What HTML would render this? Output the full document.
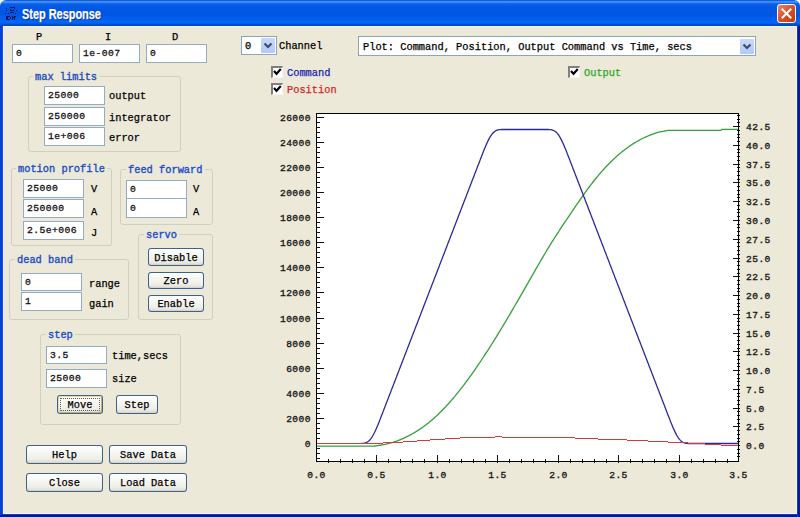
<!DOCTYPE html>
<html><head><meta charset="utf-8"><style>
html,body{margin:0;padding:0;background:#fff;}
body{width:800px;height:517px;position:relative;overflow:hidden;font-family:"Liberation Mono", monospace;font-size:10.35px;color:#000;font-weight:normal;-webkit-text-stroke:0.25px currentColor;}
.tb{position:absolute;left:0;top:0;width:800px;height:27px;border-radius:6px 6px 0 0;
background:linear-gradient(to bottom,#1060d8 0px,#1060d8 0.8px,#3f8ef8 1.2px,#3a88f6 2.5px,#1466ec 3.5px,#065ce8 5px,#0058e4 8px,#0056e2 15px,#0060f0 19px,#0066f8 23px,#0052dc 24px,#0046c6 25px,#0046c6 26px,#f4f6fc 26px,#f4f6fc 27px);}
.fr{position:absolute;background:#0046d5;}
.cl{position:absolute;left:3px;top:27px;width:794px;height:486px;background:#ece9d8;}
.tt{position:absolute;left:22px;top:4px;font-family:"Liberation Sans",sans-serif;font-weight:bold;font-size:14px;color:#fff;text-shadow:1px 1px 0 #0a2a8a;letter-spacing:0px;line-height:20px;transform-origin:0 0;transform:scaleX(0.78)}
.ed{position:absolute;background:#fff;border:1px solid #93abc3;padding-left:3px;box-sizing:content-box;white-space:nowrap;overflow:hidden;font-size:9.7px;letter-spacing:0.43px;-webkit-text-stroke:0.3px #111;color:#111}
.lb{position:absolute;line-height:14px;white-space:nowrap}
.gb{position:absolute;border:1px solid #d0d0bf;border-radius:3px}
.gl{position:absolute;line-height:14px;color:#1a4cc8;background:#ece9d8;padding:0 2px;white-space:nowrap;-webkit-text-stroke:0.35px #1a4cc8}
.bt{position:absolute;border:1px solid #3d6389;border-radius:3px;text-align:center;white-space:nowrap;box-sizing:content-box;overflow:hidden;
box-shadow:0 0 0.6px #3d6389, inset 0 -1px 0 #d8d4c8;
background:linear-gradient(to bottom,#ffffff 0%,#f6f6f2 40%,#efeee8 75%,#dedad0 100%);}
.def{box-shadow:0 0 0.6px #3d6389, inset 1px 1px 0 #e8dca8, inset -1px -1px 0 #c8b06a;}
.def:after{content:"";position:absolute;left:2px;top:2px;right:2px;bottom:2px;border:1px dotted #606060}
.cb{position:absolute;background:#fff;border:1px solid #8ca4bc;}
.ct{position:absolute;left:4px;top:2px;line-height:14px;white-space:nowrap}
.dd{position:absolute;width:14px;height:15px;background:linear-gradient(to bottom,#cad8fa,#b4c8f6);border-radius:1px}
.ck{position:absolute;width:12px;height:12px;background:#fff;box-sizing:border-box;border-top:2px solid #808080;border-left:2px solid #808080;border-right:1px solid #f4f4f0;border-bottom:1px solid #f4f4f0}
.ck svg{position:absolute;left:-2px;top:-2px}
.ch{position:absolute;left:0;top:0}
.xb{position:absolute;left:777px;top:4px;width:19px;height:19px;box-sizing:border-box;border:1px solid #fff;border-radius:3px;background:linear-gradient(135deg,#e8876a,#d8502a 50%,#c13a14)}
</style></head><body>
<div class="tb"></div>
<div class="fr" style="left:0;top:26px;width:800px;height:491px;background:#f2f6fc"></div>
<div class="fr" style="left:0;top:26px;width:3px;height:491px;background:linear-gradient(to right,#0040e0 0px,#0040e0 1.5px,#2458c8 3px)"></div>
<div class="fr" style="left:797px;top:26px;width:3px;height:491px;background:linear-gradient(to right,#2a48b0 0px,#001aa0 1.5px,#00189c 3px)"></div>
<div class="fr" style="left:0;top:514px;width:800px;height:3px;background:linear-gradient(to bottom,#2a4ab8 0px,#001a98 1.5px,#001890 3px)"></div>
<div class="fr" style="left:797px;top:26px;width:3px;height:491px;background:linear-gradient(to right,#2a48b0 0px,#001aa0 1.5px,#00189c 3px)"></div>
<div class="cl" style="left:4px;width:792px;height:486px"></div>
<div class="tt">Step Response</div>
<svg style="position:absolute;left:0;top:0" width="24" height="24" viewBox="0 0 24 24"><g fill="#0a1458"><rect x="10" y="7" width="5" height="1"/><rect x="14" y="8" width="1" height="1"/><rect x="6" y="8" width="1" height="1"/><rect x="10" y="9" width="1" height="2"/><rect x="11" y="10" width="3" height="1"/><rect x="6" y="10" width="1" height="1"/><rect x="16" y="10" width="1" height="1"/><rect x="5" y="13" width="1" height="1"/><rect x="8" y="13" width="1" height="1"/><rect x="15" y="13" width="1" height="1"/><rect x="10" y="12" width="4" height="1"/><rect x="6" y="16" width="2" height="4"/><rect x="8" y="16" width="2" height="1"/><rect x="8" y="19" width="2" height="1"/><rect x="10" y="17" width="1" height="2"/><rect x="12" y="16" width="1" height="4"/><rect x="13" y="17" width="1" height="1"/><rect x="14" y="16" width="1" height="4"/><rect x="15" y="16" width="1" height="1"/></g></svg>
<div class="xb"><svg width="17" height="17" viewBox="0 0 17 17" style="position:absolute;left:0;top:0"><path d="M4.5 4.5 L12.5 12.5 M12.5 4.5 L4.5 12.5" stroke="#fff" stroke-width="2" stroke-linecap="square"/></svg></div>
<div class="lb" style="left:36px;top:29.5px;">P</div>
<div class="lb" style="left:105px;top:29.5px;">I</div>
<div class="lb" style="left:172px;top:29.5px;">D</div>
<div class="ed" style="left:12px;top:44px;width:56px;height:17px;line-height:18px">0</div>
<div class="ed" style="left:79px;top:44px;width:56px;height:17px;line-height:18px">1e-007</div>
<div class="ed" style="left:146px;top:44px;width:56px;height:17px;line-height:18px">0</div>
<div class="gb" style="left:28px;top:76px;width:151px;height:74px"></div>
<div class="gl" style="left:33px;top:70px">max limits</div>
<div class="ed" style="left:44px;top:86px;width:56px;height:17px;line-height:18px">25000</div>
<div class="ed" style="left:44px;top:107px;width:56px;height:17px;line-height:18px">250000</div>
<div class="ed" style="left:44px;top:127px;width:56px;height:17px;line-height:18px">1e+006</div>
<div class="lb" style="left:109px;top:88.5px;">output</div>
<div class="lb" style="left:109px;top:110.5px;">integrator</div>
<div class="lb" style="left:109px;top:130.5px;">error</div>
<div class="gb" style="left:11px;top:168px;width:99px;height:76px"></div>
<div class="gl" style="left:16px;top:162px">motion profile</div>
<div class="ed" style="left:23px;top:179px;width:56px;height:17px;line-height:18px">25000</div>
<div class="ed" style="left:23px;top:199px;width:56px;height:17px;line-height:18px">250000</div>
<div class="ed" style="left:23px;top:221px;width:56px;height:17px;line-height:18px">2.5e+006</div>
<div class="lb" style="left:91px;top:181.5px;">V</div>
<div class="lb" style="left:91px;top:204.5px;">A</div>
<div class="lb" style="left:91px;top:225.5px;">J</div>
<div class="gb" style="left:120px;top:169px;width:91px;height:54px"></div>
<div class="gl" style="left:126px;top:163px">feed forward</div>
<div class="ed" style="left:126px;top:180px;width:56px;height:17px;line-height:18px">0</div>
<div class="ed" style="left:126px;top:198px;width:56px;height:18px;line-height:19px">0</div>
<div class="lb" style="left:193px;top:181.5px;">V</div>
<div class="lb" style="left:193px;top:204.5px;">A</div>
<div class="gb" style="left:138px;top:234px;width:73px;height:84px"></div>
<div class="gl" style="left:144px;top:228px">servo</div>
<div class="bt" style="left:148px;top:248px;width:54px;height:16px;line-height:18px">Disable</div>
<div class="bt" style="left:148px;top:272px;width:54px;height:15px;line-height:17px">Zero</div>
<div class="bt" style="left:148px;top:295px;width:54px;height:15px;line-height:17px">Enable</div>
<div class="gb" style="left:9px;top:259px;width:118px;height:59px"></div>
<div class="gl" style="left:15px;top:253px">dead band</div>
<div class="ed" style="left:21px;top:273px;width:56px;height:16px;line-height:17px">0</div>
<div class="ed" style="left:21px;top:292px;width:56px;height:17px;line-height:18px">1</div>
<div class="lb" style="left:89px;top:276.5px;">range</div>
<div class="lb" style="left:89px;top:296.5px;">gain</div>
<div class="gb" style="left:40px;top:334px;width:139px;height:89px"></div>
<div class="gl" style="left:46px;top:328px">step</div>
<div class="ed" style="left:46px;top:346px;width:56px;height:16px;line-height:17px">3.5</div>
<div class="ed" style="left:46px;top:369px;width:56px;height:17px;line-height:18px">25000</div>
<div class="lb" style="left:112px;top:348.5px;">time,secs</div>
<div class="lb" style="left:112px;top:371.5px;">size</div>
<div class="bt def" style="left:57px;top:395px;width:44px;height:17px;line-height:19px">Move</div>
<div class="bt" style="left:116px;top:395px;width:40px;height:17px;line-height:19px">Step</div>
<div class="bt" style="left:26px;top:445px;width:75px;height:17px;line-height:19px">Help</div>
<div class="bt" style="left:109px;top:445px;width:76px;height:17px;line-height:19px">Save Data</div>
<div class="bt" style="left:26px;top:473px;width:75px;height:17px;line-height:19px">Close</div>
<div class="bt" style="left:109px;top:473px;width:76px;height:17px;line-height:19px">Load Data</div>
<div class="cb" style="left:241px;top:36px;width:34px;height:17px"><span class="ct" style="left:3px">0</span><div class="dd" style="left:19px;top:1px"><svg width="14" height="15" viewBox="0 0 14 15" style="position:absolute;left:0;top:0"><path d="M3.5 5.5 L7 9 L10.5 5.5" stroke="#3d4d6e" stroke-width="2.2" fill="none"/></svg></div></div>
<div class="lb" style="left:279px;top:38.5px;">Channel</div>
<div class="cb" style="left:358px;top:36px;width:396px;height:18px"><span class="ct" style="top:2.5px">Plot: Command, Position, Output Command vs Time, secs</span><div class="dd" style="left:381px;top:2px"><svg width="14" height="15" viewBox="0 0 14 15" style="position:absolute;left:0;top:0"><path d="M3.5 5.5 L7 9 L10.5 5.5" stroke="#3d4d6e" stroke-width="2.2" fill="none"/></svg></div></div>
<div class="ck" style="left:271px;top:66px"><svg width="12" height="12" viewBox="0 0 12 12"><path d="M3 5 L5.5 7.8 L9.8 3" stroke="#000" stroke-width="2.1" fill="none"/></svg></div>
<div class="ck" style="left:271px;top:83px"><svg width="12" height="12" viewBox="0 0 12 12"><path d="M3 5 L5.5 7.8 L9.8 3" stroke="#000" stroke-width="2.1" fill="none"/></svg></div>
<div class="ck" style="left:568px;top:66px"><svg width="12" height="12" viewBox="0 0 12 12"><path d="M3 5 L5.5 7.8 L9.8 3" stroke="#000" stroke-width="2.1" fill="none"/></svg></div>
<div class="lb" style="left:287px;top:65.5px;color:#2222b0">Command</div>
<div class="lb" style="left:287px;top:82.5px;color:#d02828">Position</div>
<div class="lb" style="left:584px;top:65.5px;color:#2aa82a">Output</div>
<svg class="ch" width="800" height="517" viewBox="0 0 800 517"><rect x="316" y="113" width="423" height="349" fill="#fff"/><g fill="#111"><rect x="316" y="458" width="4" height="1"/><rect x="316" y="453" width="4" height="1"/><rect x="316" y="448" width="4" height="1"/><rect x="316" y="443" width="8" height="1"/><rect x="316" y="438" width="4" height="1"/><rect x="316" y="433" width="4" height="1"/><rect x="316" y="428" width="4" height="1"/><rect x="316" y="423" width="4" height="1"/><rect x="316" y="418" width="8" height="1"/><rect x="316" y="413" width="4" height="1"/><rect x="316" y="408" width="4" height="1"/><rect x="316" y="403" width="4" height="1"/><rect x="316" y="398" width="4" height="1"/><rect x="316" y="393" width="8" height="1"/><rect x="316" y="388" width="4" height="1"/><rect x="316" y="383" width="4" height="1"/><rect x="316" y="378" width="4" height="1"/><rect x="316" y="373" width="4" height="1"/><rect x="316" y="368" width="8" height="1"/><rect x="316" y="363" width="4" height="1"/><rect x="316" y="358" width="4" height="1"/><rect x="316" y="353" width="4" height="1"/><rect x="316" y="348" width="4" height="1"/><rect x="316" y="343" width="8" height="1"/><rect x="316" y="338" width="4" height="1"/><rect x="316" y="333" width="4" height="1"/><rect x="316" y="328" width="4" height="1"/><rect x="316" y="323" width="4" height="1"/><rect x="316" y="318" width="8" height="1"/><rect x="316" y="312" width="4" height="1"/><rect x="316" y="307" width="4" height="1"/><rect x="316" y="302" width="4" height="1"/><rect x="316" y="297" width="4" height="1"/><rect x="316" y="292" width="8" height="1"/><rect x="316" y="287" width="4" height="1"/><rect x="316" y="282" width="4" height="1"/><rect x="316" y="277" width="4" height="1"/><rect x="316" y="272" width="4" height="1"/><rect x="316" y="267" width="8" height="1"/><rect x="316" y="262" width="4" height="1"/><rect x="316" y="257" width="4" height="1"/><rect x="316" y="252" width="4" height="1"/><rect x="316" y="247" width="4" height="1"/><rect x="316" y="242" width="8" height="1"/><rect x="316" y="237" width="4" height="1"/><rect x="316" y="232" width="4" height="1"/><rect x="316" y="227" width="4" height="1"/><rect x="316" y="222" width="4" height="1"/><rect x="316" y="217" width="8" height="1"/><rect x="316" y="212" width="4" height="1"/><rect x="316" y="207" width="4" height="1"/><rect x="316" y="202" width="4" height="1"/><rect x="316" y="197" width="4" height="1"/><rect x="316" y="192" width="8" height="1"/><rect x="316" y="187" width="4" height="1"/><rect x="316" y="182" width="4" height="1"/><rect x="316" y="177" width="4" height="1"/><rect x="316" y="172" width="4" height="1"/><rect x="316" y="167" width="8" height="1"/><rect x="316" y="162" width="4" height="1"/><rect x="316" y="157" width="4" height="1"/><rect x="316" y="152" width="4" height="1"/><rect x="316" y="147" width="4" height="1"/><rect x="316" y="142" width="8" height="1"/><rect x="316" y="137" width="4" height="1"/><rect x="316" y="132" width="4" height="1"/><rect x="316" y="127" width="4" height="1"/><rect x="316" y="122" width="4" height="1"/><rect x="316" y="117" width="8" height="1"/><rect x="737" y="456" width="3" height="1"/><rect x="737" y="453" width="3" height="1"/><rect x="737" y="449" width="3" height="1"/><rect x="733" y="445" width="6" height="1"/><rect x="739" y="445" width="1" height="1"/><rect x="737" y="441" width="3" height="1"/><rect x="737" y="438" width="3" height="1"/><rect x="737" y="434" width="3" height="1"/><rect x="737" y="430" width="3" height="1"/><rect x="733" y="426" width="6" height="1"/><rect x="739" y="426" width="1" height="1"/><rect x="737" y="423" width="3" height="1"/><rect x="737" y="419" width="3" height="1"/><rect x="737" y="415" width="3" height="1"/><rect x="737" y="411" width="3" height="1"/><rect x="733" y="408" width="6" height="1"/><rect x="739" y="408" width="1" height="1"/><rect x="737" y="404" width="3" height="1"/><rect x="737" y="400" width="3" height="1"/><rect x="737" y="396" width="3" height="1"/><rect x="737" y="393" width="3" height="1"/><rect x="733" y="389" width="6" height="1"/><rect x="739" y="389" width="1" height="1"/><rect x="737" y="385" width="3" height="1"/><rect x="737" y="381" width="3" height="1"/><rect x="737" y="378" width="3" height="1"/><rect x="737" y="374" width="3" height="1"/><rect x="733" y="370" width="6" height="1"/><rect x="739" y="370" width="1" height="1"/><rect x="737" y="366" width="3" height="1"/><rect x="737" y="363" width="3" height="1"/><rect x="737" y="359" width="3" height="1"/><rect x="737" y="355" width="3" height="1"/><rect x="733" y="351" width="6" height="1"/><rect x="739" y="351" width="1" height="1"/><rect x="737" y="348" width="3" height="1"/><rect x="737" y="344" width="3" height="1"/><rect x="737" y="340" width="3" height="1"/><rect x="737" y="336" width="3" height="1"/><rect x="733" y="333" width="6" height="1"/><rect x="739" y="333" width="1" height="1"/><rect x="737" y="329" width="3" height="1"/><rect x="737" y="325" width="3" height="1"/><rect x="737" y="321" width="3" height="1"/><rect x="737" y="318" width="3" height="1"/><rect x="733" y="314" width="6" height="1"/><rect x="739" y="314" width="1" height="1"/><rect x="737" y="310" width="3" height="1"/><rect x="737" y="306" width="3" height="1"/><rect x="737" y="303" width="3" height="1"/><rect x="737" y="299" width="3" height="1"/><rect x="733" y="295" width="6" height="1"/><rect x="739" y="295" width="1" height="1"/><rect x="737" y="291" width="3" height="1"/><rect x="737" y="288" width="3" height="1"/><rect x="737" y="284" width="3" height="1"/><rect x="737" y="280" width="3" height="1"/><rect x="733" y="276" width="6" height="1"/><rect x="739" y="276" width="1" height="1"/><rect x="737" y="273" width="3" height="1"/><rect x="737" y="269" width="3" height="1"/><rect x="737" y="265" width="3" height="1"/><rect x="737" y="261" width="3" height="1"/><rect x="733" y="258" width="6" height="1"/><rect x="739" y="258" width="1" height="1"/><rect x="737" y="254" width="3" height="1"/><rect x="737" y="250" width="3" height="1"/><rect x="737" y="246" width="3" height="1"/><rect x="737" y="242" width="3" height="1"/><rect x="733" y="239" width="6" height="1"/><rect x="739" y="239" width="1" height="1"/><rect x="737" y="235" width="3" height="1"/><rect x="737" y="231" width="3" height="1"/><rect x="737" y="227" width="3" height="1"/><rect x="737" y="224" width="3" height="1"/><rect x="733" y="220" width="6" height="1"/><rect x="739" y="220" width="1" height="1"/><rect x="737" y="216" width="3" height="1"/><rect x="737" y="212" width="3" height="1"/><rect x="737" y="209" width="3" height="1"/><rect x="737" y="205" width="3" height="1"/><rect x="733" y="201" width="6" height="1"/><rect x="739" y="201" width="1" height="1"/><rect x="737" y="197" width="3" height="1"/><rect x="737" y="194" width="3" height="1"/><rect x="737" y="190" width="3" height="1"/><rect x="737" y="186" width="3" height="1"/><rect x="733" y="182" width="6" height="1"/><rect x="739" y="182" width="1" height="1"/><rect x="737" y="179" width="3" height="1"/><rect x="737" y="175" width="3" height="1"/><rect x="737" y="171" width="3" height="1"/><rect x="737" y="167" width="3" height="1"/><rect x="733" y="164" width="6" height="1"/><rect x="739" y="164" width="1" height="1"/><rect x="737" y="160" width="3" height="1"/><rect x="737" y="156" width="3" height="1"/><rect x="737" y="152" width="3" height="1"/><rect x="737" y="149" width="3" height="1"/><rect x="733" y="145" width="6" height="1"/><rect x="739" y="145" width="1" height="1"/><rect x="737" y="141" width="3" height="1"/><rect x="737" y="137" width="3" height="1"/><rect x="737" y="134" width="3" height="1"/><rect x="737" y="130" width="3" height="1"/><rect x="733" y="126" width="6" height="1"/><rect x="739" y="126" width="1" height="1"/><rect x="737" y="122" width="3" height="1"/><rect x="737" y="119" width="3" height="1"/><rect x="737" y="115" width="3" height="1"/><rect x="328" y="459" width="1" height="4"/><rect x="340" y="459" width="1" height="4"/><rect x="352" y="459" width="1" height="4"/><rect x="364" y="459" width="1" height="4"/><rect x="376" y="455" width="1" height="8"/><rect x="388" y="459" width="1" height="4"/><rect x="400" y="459" width="1" height="4"/><rect x="412" y="459" width="1" height="4"/><rect x="424" y="459" width="1" height="4"/><rect x="437" y="455" width="1" height="8"/><rect x="449" y="459" width="1" height="4"/><rect x="461" y="459" width="1" height="4"/><rect x="473" y="459" width="1" height="4"/><rect x="485" y="459" width="1" height="4"/><rect x="497" y="455" width="1" height="8"/><rect x="509" y="459" width="1" height="4"/><rect x="521" y="459" width="1" height="4"/><rect x="533" y="459" width="1" height="4"/><rect x="545" y="459" width="1" height="4"/><rect x="558" y="455" width="1" height="8"/><rect x="570" y="459" width="1" height="4"/><rect x="582" y="459" width="1" height="4"/><rect x="594" y="459" width="1" height="4"/><rect x="606" y="459" width="1" height="4"/><rect x="618" y="455" width="1" height="8"/><rect x="630" y="459" width="1" height="4"/><rect x="642" y="459" width="1" height="4"/><rect x="654" y="459" width="1" height="4"/><rect x="666" y="459" width="1" height="4"/><rect x="679" y="455" width="1" height="8"/><rect x="691" y="459" width="1" height="4"/><rect x="703" y="459" width="1" height="4"/><rect x="715" y="459" width="1" height="4"/><rect x="727" y="459" width="1" height="4"/></g><polyline points="316.70,446.10 374.00,446.10 375.00,445.98 376.00,445.85 377.00,445.71 378.00,445.56 379.00,445.41 380.00,445.25 381.00,445.09 382.00,444.92 383.00,444.73 384.00,444.54 385.00,444.34 386.00,444.13 387.00,443.90 388.00,443.66 389.00,443.41 390.00,443.14 391.00,442.86 392.00,442.57 393.00,442.27 394.00,441.95 395.00,441.62 396.00,441.28 397.00,440.93 398.00,440.56 399.00,440.18 400.00,439.79 401.00,439.38 402.00,438.96 403.00,438.53 404.00,438.09 405.00,437.63 406.00,437.15 407.00,436.67 408.00,436.17 409.00,435.65 410.00,435.13 411.00,434.59 412.00,434.03 413.00,433.46 414.00,432.88 415.00,432.28 416.00,431.67 417.00,431.05 418.00,430.41 419.00,429.75 420.00,429.08 421.00,428.40 422.00,427.70 423.00,426.99 424.00,426.26 425.00,425.52 426.00,424.76 427.00,423.99 428.00,423.20 429.00,422.40 430.00,421.58 431.00,420.75 432.00,419.90 433.00,419.04 434.00,418.16 435.00,417.27 436.00,416.36 437.00,415.43 438.00,414.49 439.00,413.53 440.00,412.56 441.00,411.57 442.00,410.56 443.00,409.54 444.00,408.50 445.00,407.45 446.00,406.38 447.00,405.30 448.00,404.21 449.00,403.09 450.00,401.97 451.00,400.83 452.00,399.67 453.00,398.51 454.00,397.32 455.00,396.13 456.00,394.91 457.00,393.69 458.00,392.46 459.00,391.21 460.00,389.95 461.00,388.67 462.00,387.38 463.00,386.08 464.00,384.77 465.00,383.45 466.00,382.11 467.00,380.76 468.00,379.40 469.00,378.03 470.00,376.65 471.00,375.26 472.00,373.85 473.00,372.44 474.00,371.01 475.00,369.58 476.00,368.13 477.00,366.68 478.00,365.21 479.00,363.74 480.00,362.25 481.00,360.75 482.00,359.25 483.00,357.74 484.00,356.22 485.00,354.69 486.00,353.15 487.00,351.60 488.00,350.04 489.00,348.48 490.00,346.91 491.00,345.33 492.00,343.74 493.00,342.15 494.00,340.54 495.00,338.94 496.00,337.32 497.00,335.70 498.00,334.07 499.00,332.43 500.00,330.79 501.00,329.14 502.00,327.49 503.00,325.83 504.00,324.16 505.00,322.49 506.00,320.81 507.00,319.13 508.00,317.44 509.00,315.75 510.00,314.06 511.00,312.36 512.00,310.65 513.00,308.94 514.00,307.23 515.00,305.51 516.00,303.79 517.00,302.07 518.00,300.34 519.00,298.61 520.00,296.88 521.00,295.14 522.00,293.40 523.00,291.66 524.00,289.92 525.00,288.17 526.00,286.42 527.00,284.67 528.00,282.92 529.00,281.16 530.00,279.41 531.00,277.66 532.00,275.91 533.00,274.16 534.00,272.41 535.00,270.66 536.00,268.92 537.00,267.18 538.00,265.45 539.00,263.71 540.00,261.99 541.00,260.27 542.00,258.56 543.00,256.85 544.00,255.16 545.00,253.47 546.00,251.79 547.00,250.12 548.00,248.46 549.00,246.81 550.00,245.18 551.00,243.55 552.00,241.94 553.00,240.34 554.00,238.75 555.00,237.18 556.00,235.62 557.00,234.07 558.00,232.53 559.00,231.00 560.00,229.48 561.00,227.97 562.00,226.46 563.00,224.96 564.00,223.47 565.00,221.98 566.00,220.49 567.00,219.00 568.00,217.52 569.00,216.04 570.00,214.56 571.00,213.08 572.00,211.60 573.00,210.12 574.00,208.64 575.00,207.16 576.00,205.69 577.00,204.22 578.00,202.76 579.00,201.30 580.00,199.85 581.00,198.40 582.00,196.97 583.00,195.54 584.00,194.13 585.00,192.73 586.00,191.34 587.00,189.96 588.00,188.60 589.00,187.25 590.00,185.91 591.00,184.60 592.00,183.30 593.00,182.01 594.00,180.74 595.00,179.49 596.00,178.26 597.00,177.04 598.00,175.84 599.00,174.65 600.00,173.48 601.00,172.33 602.00,171.19 603.00,170.07 604.00,168.97 605.00,167.88 606.00,166.81 607.00,165.75 608.00,164.71 609.00,163.69 610.00,162.68 611.00,161.69 612.00,160.72 613.00,159.76 614.00,158.82 615.00,157.89 616.00,156.98 617.00,156.08 618.00,155.20 619.00,154.34 620.00,153.49 621.00,152.66 622.00,151.85 623.00,151.05 624.00,150.26 625.00,149.49 626.00,148.74 627.00,148.00 628.00,147.28 629.00,146.57 630.00,145.88 631.00,145.20 632.00,144.54 633.00,143.89 634.00,143.26 635.00,142.64 636.00,142.04 637.00,141.45 638.00,140.88 639.00,140.33 640.00,139.79 641.00,139.26 642.00,138.74 643.00,138.24 644.00,137.76 645.00,137.30 646.00,136.84 647.00,136.40 648.00,135.98 649.00,135.56 650.00,135.17 651.00,134.78 652.00,134.40 653.00,134.02 654.00,133.65 655.00,133.30 656.00,132.97 657.00,132.67 658.00,132.40 659.00,132.16 660.00,131.93 661.00,131.73 662.00,131.53 663.00,131.35 664.00,131.17 665.00,131.00 666.00,130.81 667.00,130.62 668.00,130.46 669.00,130.40 670.00,130.40 671.00,130.40 672.00,130.40 673.00,130.40 674.00,130.40 675.00,130.40 676.00,130.40 677.00,130.40 678.00,130.40 679.00,130.40 680.00,130.40 681.00,130.40 682.00,130.40 683.00,130.40 684.00,130.40 685.00,130.40 686.00,130.40 687.00,130.40 688.00,130.40 689.00,130.40 690.00,130.40 691.00,130.40 692.00,130.40 693.00,130.40 694.00,130.40 695.00,130.40 696.00,130.40 697.00,130.40 698.00,130.40 699.00,130.40 700.00,130.40 701.00,130.40 702.00,130.40 703.00,130.40 704.00,130.40 705.00,130.40 706.00,130.40 707.00,130.40 708.00,130.40 709.00,130.40 710.00,130.40 711.00,130.40 712.00,130.40 713.00,130.40 714.00,130.40 715.00,130.40 716.00,130.40 717.00,130.40 718.00,130.40 719.00,130.40 720.00,130.40 721.00,130.40 722.00,129.30 738.60,129.30" fill="none" stroke="#38a038" stroke-width="1.3"/><polyline points="361.50,443.48 362.00,443.46 362.50,443.43 363.00,443.38 363.50,443.32 364.00,443.24 364.50,443.13 365.00,443.00 365.50,442.84 366.00,442.65 366.50,442.43 367.00,442.17 367.50,441.87 368.00,441.53 368.50,441.15 369.00,440.72 369.50,440.24 370.00,439.71 370.50,439.12 371.00,438.48 371.50,437.78 372.00,437.03 372.50,436.22 373.00,435.36 373.50,434.46 374.00,433.51 374.50,432.52 375.00,431.49 375.50,430.42 376.00,429.32 376.50,428.19 377.00,427.03 377.50,425.84 378.00,424.64 378.50,423.41 379.00,422.16 379.50,420.90 380.00,419.62 380.50,418.34 381.00,417.05 381.50,415.76 382.00,414.46 382.50,413.16 383.00,411.87 383.50,410.57 384.00,409.27 384.50,407.98 385.00,406.68 385.50,405.38 386.00,404.09 386.50,402.79 387.00,401.50 387.50,400.20 388.00,398.90 388.50,397.61 389.00,396.31 389.50,395.01 390.00,393.72 390.50,392.42 391.00,391.12 391.50,389.83 392.00,388.53 392.50,387.23 393.00,385.94 393.50,384.64 394.00,383.34 394.50,382.05 395.00,380.75 395.50,379.46 396.00,378.16 396.50,376.86 397.00,375.57 397.50,374.27 398.00,372.97 398.50,371.68 399.00,370.38 399.50,369.08 400.00,367.79 400.50,366.49 401.00,365.19 401.50,363.90 402.00,362.60 402.50,361.31 403.00,360.01 403.50,358.71 404.00,357.42 404.50,356.12 405.00,354.82 405.50,353.53 406.00,352.23 406.50,350.93 407.00,349.64 407.50,348.34 408.00,347.04 408.50,345.75 409.00,344.45 409.50,343.15 410.00,341.86 410.50,340.56 411.00,339.27 411.50,337.97 412.00,336.67 412.50,335.38 413.00,334.08 413.50,332.78 414.00,331.49 414.50,330.19 415.00,328.89 415.50,327.60 416.00,326.30 416.50,325.00 417.00,323.71 417.50,322.41 418.00,321.12 418.50,319.82 419.00,318.52 419.50,317.23 420.00,315.93 420.50,314.63 421.00,313.34 421.50,312.04 422.00,310.74 422.50,309.45 423.00,308.15 423.50,306.85 424.00,305.56 424.50,304.26 425.00,302.96 425.50,301.67 426.00,300.37 426.50,299.08 427.00,297.78 427.50,296.48 428.00,295.19 428.50,293.89 429.00,292.59 429.50,291.30 430.00,290.00 430.50,288.70 431.00,287.41 431.50,286.11 432.00,284.81 432.50,283.52 433.00,282.22 433.50,280.93 434.00,279.63 434.50,278.33 435.00,277.04 435.50,275.74 436.00,274.44 436.50,273.15 437.00,271.85 437.50,270.55 438.00,269.26 438.50,267.96 439.00,266.66 439.50,265.37 440.00,264.07 440.50,262.77 441.00,261.48 441.50,260.18 442.00,258.89 442.50,257.59 443.00,256.29 443.50,255.00 444.00,253.70 444.50,252.40 445.00,251.11 445.50,249.81 446.00,248.51 446.50,247.22 447.00,245.92 447.50,244.62 448.00,243.33 448.50,242.03 449.00,240.74 449.50,239.44 450.00,238.14 450.50,236.85 451.00,235.55 451.50,234.25 452.00,232.96 452.50,231.66 453.00,230.36 453.50,229.07 454.00,227.77 454.50,226.47 455.00,225.18 455.50,223.88 456.00,222.59 456.50,221.29 457.00,219.99 457.50,218.70 458.00,217.40 458.50,216.10 459.00,214.81 459.50,213.51 460.00,212.21 460.50,210.92 461.00,209.62 461.50,208.32 462.00,207.03 462.50,205.73 463.00,204.43 463.50,203.14 464.00,201.84 464.50,200.55 465.00,199.25 465.50,197.95 466.00,196.66 466.50,195.36 467.00,194.06 467.50,192.77 468.00,191.47 468.50,190.17 469.00,188.88 469.50,187.58 470.00,186.28 470.50,184.99 471.00,183.69 471.50,182.40 472.00,181.10 472.50,179.80 473.00,178.51 473.50,177.21 474.00,175.91 474.50,174.62 475.00,173.32 475.50,172.02 476.00,170.73 476.50,169.43 477.00,168.13 477.50,166.84 478.00,165.54 478.50,164.24 479.00,162.95 479.50,161.65 480.00,160.36 480.50,159.06 481.00,157.76 481.50,156.47 482.00,155.17 482.50,153.89 483.00,152.61 483.50,151.34 484.00,150.09 484.50,148.85 485.00,147.64 485.50,146.44 486.00,145.27 486.50,144.13 487.00,143.02 487.50,141.94 488.00,140.89 488.50,139.88 489.00,138.92 489.50,137.99 490.00,137.12 490.50,136.29 491.00,135.51 491.50,134.79 492.00,134.13 492.50,133.52 493.00,132.97 493.50,132.47 494.00,132.02 494.50,131.62 495.00,131.26 495.50,130.95 496.00,130.67 496.50,130.44 497.00,130.23 497.50,130.06 498.00,129.92 498.50,129.80 499.00,129.71 499.50,129.64 500.00,129.59 500.50,129.55 501.00,129.52 501.50,129.51 502.00,129.50 502.50,129.50 503.00,129.50 503.50,129.50 504.00,129.50 504.50,129.50 505.00,129.50 505.50,129.50 506.00,129.50 506.50,129.50 507.00,129.50 507.50,129.50 508.00,129.50 508.50,129.50 509.00,129.50 509.50,129.50 510.00,129.50 510.50,129.50 511.00,129.50 511.50,129.50 512.00,129.50 512.50,129.50 513.00,129.50 513.50,129.50 514.00,129.50 514.50,129.50 515.00,129.50 515.50,129.50 516.00,129.50 516.50,129.50 517.00,129.50 517.50,129.50 518.00,129.50 518.50,129.50 519.00,129.50 519.50,129.50 520.00,129.50 520.50,129.50 521.00,129.50 521.50,129.50 522.00,129.50 522.50,129.50 523.00,129.50 523.50,129.50 524.00,129.50 524.50,129.50 525.00,129.50 525.50,129.50 526.00,129.50 526.50,129.50 527.00,129.50 527.50,129.50 528.00,129.50 528.50,129.50 529.00,129.50 529.50,129.50 530.00,129.50 530.50,129.50 531.00,129.50 531.50,129.50 532.00,129.50 532.50,129.50 533.00,129.50 533.50,129.50 534.00,129.50 534.50,129.50 535.00,129.50 535.50,129.50 536.00,129.50 536.50,129.50 537.00,129.50 537.50,129.50 538.00,129.50 538.50,129.50 539.00,129.50 539.50,129.50 540.00,129.50 540.50,129.50 541.00,129.50 541.50,129.50 542.00,129.50 542.50,129.50 543.00,129.50 543.50,129.50 544.00,129.50 544.50,129.50 545.00,129.50 545.50,129.50 546.00,129.50 546.50,129.50 547.00,129.50 547.50,129.50 548.00,129.50 548.50,129.51 549.00,129.53 549.50,129.56 550.00,129.60 550.50,129.65 551.00,129.73 551.50,129.83 552.00,129.95 552.50,130.09 553.00,130.27 553.50,130.48 554.00,130.73 554.50,131.01 555.00,131.33 555.50,131.70 556.00,132.11 556.50,132.56 557.00,133.07 557.50,133.64 558.00,134.26 558.50,134.94 559.00,135.67 559.50,136.46 560.00,137.30 560.50,138.18 561.00,139.12 561.50,140.09 562.00,141.11 562.50,142.16 563.00,143.25 563.50,144.37 564.00,145.52 564.50,146.69 565.00,147.89 565.50,149.12 566.00,150.36 566.50,151.61 567.00,152.88 567.50,154.16 568.00,155.45 568.50,156.75 569.00,158.05 569.50,159.34 570.00,160.64 570.50,161.94 571.00,163.24 571.50,164.53 572.00,165.83 572.50,167.13 573.00,168.43 573.50,169.72 574.00,171.02 574.50,172.32 575.00,173.62 575.50,174.91 576.00,176.21 576.50,177.51 577.00,178.81 577.50,180.10 578.00,181.40 578.50,182.70 579.00,184.00 579.50,185.29 580.00,186.59 580.50,187.89 581.00,189.19 581.50,190.48 582.00,191.78 582.50,193.08 583.00,194.38 583.50,195.67 584.00,196.97 584.50,198.27 585.00,199.57 585.50,200.86 586.00,202.16 586.50,203.46 587.00,204.76 587.50,206.05 588.00,207.35 588.50,208.65 589.00,209.95 589.50,211.24 590.00,212.54 590.50,213.84 591.00,215.14 591.50,216.43 592.00,217.73 592.50,219.03 593.00,220.33 593.50,221.62 594.00,222.92 594.50,224.22 595.00,225.52 595.50,226.81 596.00,228.11 596.50,229.41 597.00,230.71 597.50,232.00 598.00,233.30 598.50,234.60 599.00,235.90 599.50,237.19 600.00,238.49 600.50,239.79 601.00,241.09 601.50,242.38 602.00,243.68 602.50,244.98 603.00,246.28 603.50,247.57 604.00,248.87 604.50,250.17 605.00,251.47 605.50,252.76 606.00,254.06 606.50,255.36 607.00,256.66 607.50,257.95 608.00,259.25 608.50,260.55 609.00,261.85 609.50,263.14 610.00,264.44 610.50,265.74 611.00,267.04 611.50,268.33 612.00,269.63 612.50,270.93 613.00,272.23 613.50,273.52 614.00,274.82 614.50,276.12 615.00,277.42 615.50,278.71 616.00,280.01 616.50,281.31 617.00,282.61 617.50,283.90 618.00,285.20 618.50,286.50 619.00,287.80 619.50,289.10 620.00,290.39 620.50,291.69 621.00,292.99 621.50,294.29 622.00,295.58 622.50,296.88 623.00,298.18 623.50,299.48 624.00,300.77 624.50,302.07 625.00,303.37 625.50,304.67 626.00,305.96 626.50,307.26 627.00,308.56 627.50,309.86 628.00,311.15 628.50,312.45 629.00,313.75 629.50,315.05 630.00,316.34 630.50,317.64 631.00,318.94 631.50,320.24 632.00,321.53 632.50,322.83 633.00,324.13 633.50,325.43 634.00,326.72 634.50,328.02 635.00,329.32 635.50,330.62 636.00,331.91 636.50,333.21 637.00,334.51 637.50,335.81 638.00,337.10 638.50,338.40 639.00,339.70 639.50,341.00 640.00,342.29 640.50,343.59 641.00,344.89 641.50,346.19 642.00,347.48 642.50,348.78 643.00,350.08 643.50,351.38 644.00,352.67 644.50,353.97 645.00,355.27 645.50,356.57 646.00,357.86 646.50,359.16 647.00,360.46 647.50,361.76 648.00,363.05 648.50,364.35 649.00,365.65 649.50,366.95 650.00,368.24 650.50,369.54 651.00,370.84 651.50,372.14 652.00,373.43 652.50,374.73 653.00,376.03 653.50,377.33 654.00,378.62 654.50,379.92 655.00,381.22 655.50,382.52 656.00,383.81 656.50,385.11 657.00,386.41 657.50,387.71 658.00,389.00 658.50,390.30 659.00,391.60 659.50,392.90 660.00,394.19 660.50,395.49 661.00,396.79 661.50,398.09 662.00,399.38 662.50,400.68 663.00,401.98 663.50,403.28 664.00,404.57 664.50,405.87 665.00,407.17 665.50,408.47 666.00,409.76 666.50,411.06 667.00,412.36 667.50,413.66 668.00,414.95 668.50,416.25 669.00,417.55 669.50,418.84 670.00,420.12 670.50,421.39 671.00,422.64 671.50,423.88 672.00,425.11 672.50,426.31 673.00,427.48 673.50,428.63 674.00,429.75 674.50,430.84 675.00,431.89 675.50,432.91 676.00,433.88 676.50,434.82 677.00,435.70 677.50,436.54 678.00,437.33 678.50,438.06 679.00,438.74 679.50,439.36 680.00,439.93 680.50,440.44 681.00,440.89 681.50,441.30 682.00,441.67 682.50,441.99 683.00,442.27 683.50,442.52 684.00,442.73 684.50,442.91 685.00,443.05 685.50,443.17 686.00,443.27 686.50,443.35 687.00,443.40 687.50,443.44 688.00,443.47 688.50,443.49 689.00,443.50 689.50,443.50 690.00,443.50 690.50,443.50 691.00,443.50 691.50,443.50 692.00,443.50 692.50,443.50 693.00,443.50 693.50,443.50 694.00,443.50 694.50,443.50 695.00,443.50 695.50,443.50 696.00,443.50 696.50,443.50 697.00,443.50 697.50,443.50 698.00,443.50 698.50,443.50 699.00,443.50 699.50,443.50 700.00,443.50 700.50,443.50 701.00,443.50 701.50,443.50 702.00,443.50 702.50,443.50 703.00,443.50 703.50,443.50 704.00,443.50 704.50,443.50 705.00,443.50 705.50,443.50 706.00,443.50 706.50,443.50 707.00,443.50 707.50,443.50 708.00,443.50 708.50,443.50 709.00,443.50 709.50,443.50 710.00,443.50 710.50,443.50 711.00,443.50 711.50,443.50 712.00,443.50 712.50,443.50 713.00,443.50 713.50,443.50 714.00,443.50 714.50,443.50 715.00,443.50 715.50,443.50 716.00,443.50 716.50,443.50 717.00,443.50 717.50,443.50 718.00,443.50 718.50,443.50 719.00,443.50 719.50,443.50 720.00,443.50 720.50,443.50 721.00,443.50 721.50,443.50 722.00,443.50 722.50,443.50 723.00,443.50 723.50,443.50 724.00,443.50 724.50,443.50 725.00,443.50 725.50,443.50 726.00,443.50 726.50,443.50 727.00,443.50 727.50,443.50 728.00,443.50 728.50,443.50 729.00,443.50 729.50,443.50 730.00,443.50 730.50,443.50 731.00,443.50 731.50,443.50 732.00,443.50 732.50,443.50 733.00,443.50 733.50,443.50 734.00,443.50 734.50,443.50 735.00,443.50 735.50,443.50 736.00,443.50 736.50,443.50 737.00,443.50 737.50,443.50 738.00,443.50 738.50,443.50" fill="none" stroke="#2a2a9c" stroke-width="1.3"/><g fill="#d43c3c"><rect x="316.7" y="443" width="66.31" height="1"/><rect x="383" y="442" width="20.01" height="1"/><rect x="403" y="441" width="14.01" height="1"/><rect x="417" y="440" width="13.01" height="1"/><rect x="430" y="439" width="15.01" height="1"/><rect x="445" y="438" width="15.01" height="1"/><rect x="460" y="437" width="35.01" height="1"/><rect x="495" y="436" width="7.01" height="1"/><rect x="502" y="437" width="73.01" height="1"/><rect x="575" y="438" width="23.01" height="1"/><rect x="598" y="439" width="29.01" height="1"/><rect x="627" y="440" width="21.01" height="1"/><rect x="648" y="441" width="20.01" height="1"/><rect x="668" y="442" width="20.01" height="1"/><rect x="688" y="443" width="17.01" height="1"/><rect x="705" y="444" width="16.01" height="1"/><rect x="721" y="445" width="17.61" height="1"/></g><g fill="#000"><rect x="316" y="113" width="423" height="1"/><rect x="316" y="461" width="423" height="1"/><rect x="316" y="113" width="1" height="349"/><rect x="738" y="113" width="1" height="349"/></g><g font-family="'Liberation Mono', monospace" font-size="9.6" fill="#181818" font-weight="normal" letter-spacing="0.45" stroke="#181818" stroke-width="0.35"><text x="311" y="447" text-anchor="end">0</text><text x="311" y="422" text-anchor="end">2000</text><text x="311" y="397" text-anchor="end">4000</text><text x="311" y="372" text-anchor="end">6000</text><text x="311" y="347" text-anchor="end">8000</text><text x="311" y="322" text-anchor="end">10000</text><text x="311" y="296" text-anchor="end">12000</text><text x="311" y="271" text-anchor="end">14000</text><text x="311" y="246" text-anchor="end">16000</text><text x="311" y="221" text-anchor="end">18000</text><text x="311" y="196" text-anchor="end">20000</text><text x="311" y="171" text-anchor="end">22000</text><text x="311" y="146" text-anchor="end">24000</text><text x="311" y="121" text-anchor="end">26000</text><text x="746" y="449">0.0</text><text x="746" y="430">2.5</text><text x="746" y="412">5.0</text><text x="746" y="393">7.5</text><text x="746" y="374">10.0</text><text x="746" y="355">12.5</text><text x="746" y="337">15.0</text><text x="746" y="318">17.5</text><text x="746" y="299">20.0</text><text x="746" y="280">22.5</text><text x="746" y="262">25.0</text><text x="746" y="243">27.5</text><text x="746" y="224">30.0</text><text x="746" y="205">32.5</text><text x="746" y="186">35.0</text><text x="746" y="168">37.5</text><text x="746" y="149">40.0</text><text x="746" y="130">42.5</text><text x="316.5" y="478" text-anchor="middle">0.0</text><text x="376.5" y="478" text-anchor="middle">0.5</text><text x="437.5" y="478" text-anchor="middle">1.0</text><text x="497.5" y="478" text-anchor="middle">1.5</text><text x="558.5" y="478" text-anchor="middle">2.0</text><text x="618.5" y="478" text-anchor="middle">2.5</text><text x="679.5" y="478" text-anchor="middle">3.0</text><text x="738.5" y="478" text-anchor="middle">3.5</text></g></svg>
</body></html>
